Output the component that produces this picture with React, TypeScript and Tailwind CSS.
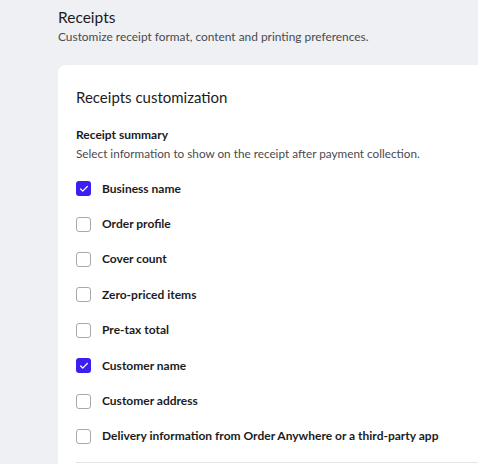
import { Check } from "lucide-react";

const items = [
  { label: "Business name", checked: true },
  { label: "Order profile", checked: false },
  { label: "Cover count", checked: false },
  { label: "Zero-priced items", checked: false },
  { label: "Pre-tax total", checked: false },
  { label: "Customer name", checked: true },
  { label: "Customer address", checked: false },
  { label: "Delivery information from Order Anywhere or a third-party app", checked: false },
];

function Checkbox({ checked }: { checked: boolean }) {
  if (checked) {
    return (
      <span className="flex h-[15px] w-[15px] shrink-0 items-center justify-center rounded-[3px] bg-[#3b1ff0]">
        <Check className="h-[10px] w-[10px] text-white" strokeWidth={3} />
      </span>
    );
  }
  return <span className="h-[15px] w-[15px] shrink-0 rounded-[3px] border border-[#a9a9ad] bg-white" />;
}

export default function App() {
  return (
    <div className="h-[464px] w-full overflow-hidden bg-[#eef0f4] pl-[58px] font-['Lato',sans-serif] text-[#1c1c1e]">
      {/* Page header */}
      <div className="pt-[6px]">
        <h1 className="text-[15.5px] leading-[22px]">Receipts</h1>
        <p className="text-[11.9px] leading-[18px] text-[#4a4a4f]">
          Customize receipt format, content and printing preferences.
        </p>
      </div>

      {/* Card */}
      <section className="mt-[19px] h-[420px] rounded-l-[8px] bg-white pl-[18px] pt-[20px]">
        <h2 className="text-[15px] leading-6">Receipts customization</h2>

        <div className="mt-[17px]">
          <h3 className="text-[12px] font-bold leading-[18px]">Receipt summary</h3>
          <p className="text-[11.75px] leading-[19px] text-[#4a4a4f]">
            Select information to show on the receipt after payment collection.
          </p>
        </div>

        <ul className="mt-[8px]">
          {items.map((item) => (
            <li key={item.label} className="flex h-[35.4px] items-center gap-[11px]">
              <Checkbox checked={item.checked} />
              <span className="text-[12px] font-bold">{item.label}</span>
            </li>
          ))}
        </ul>

        <div className="mt-[8px] h-px bg-[#e4e4e8]" />
      </section>
    </div>
  );
}
